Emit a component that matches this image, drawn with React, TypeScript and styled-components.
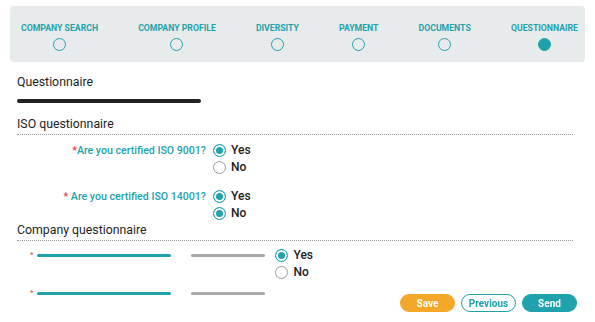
import React from "react";
import styled, { createGlobalStyle } from "styled-components";

const TEAL = "#1fa2ac";
const RED = "#e2404f";

const Global = createGlobalStyle`
  html, body { margin: 0; padding: 0; background: #ffffff; }
  body { font-family: Roboto, "Liberation Sans", Arial, sans-serif; color: #222; }
  * { box-sizing: border-box; }
`;

const Page = styled.div`
  padding: 6px 10px 0 10px;
`;

const Stepper = styled.nav`
  height: 56px;
  background: #e8ebec;
  border-radius: 4px;
  display: flex;
  justify-content: space-between;
  padding: 17px 7px 0 11px;
`;

const Step = styled.div`
  display: flex;
  flex-direction: column;
  align-items: center;
  gap: 4px;
`;

const StepLabel = styled.span`
  font-size: 8.7px;
  line-height: 11px;
  font-weight: 700;
  color: ${TEAL};
  white-space: nowrap;
`;

const StepDot = styled.span<{ $active?: boolean }>`
  width: 13px;
  height: 13px;
  border-radius: 50%;
  border: 1.3px solid ${TEAL};
  background: ${(p) => (p.$active ? TEAL : "transparent")};
`;

const Content = styled.div`
  padding: 0 12px 0 7px;
`;

const Title = styled.h1`
  margin: 12px 0 0 0;
  font-size: 12.3px;
  line-height: 16px;
  font-weight: 400;
  color: #1e1e1e;
`;

const TitleBar = styled.div`
  margin-top: 9px;
  width: 184px;
  height: 3.5px;
  border-radius: 2px;
  background: #222;
`;

const SectionHeading = styled.h2<{ $top: number }>`
  margin: ${(p) => p.$top}px 0 0 0;
  padding-bottom: 2px;
  font-size: 12.3px;
  line-height: 16px;
  font-weight: 400;
  color: #1e1e1e;
  border-bottom: 1px dotted #9a9a9a;
`;

const QuestionRow = styled.div<{ $top: number }>`
  display: grid;
  grid-template-columns: 189px auto;
  column-gap: 7px;
  margin-top: ${(p) => p.$top}px;
`;

const QuestionLabel = styled.label`
  text-align: right;
  font-size: 10.6px;
  line-height: 17px;
  font-weight: 500;
  color: ${TEAL};
  white-space: nowrap;
`;

const Star = styled.span`
  color: ${RED};
`;

const Options = styled.div`
  display: flex;
  flex-direction: column;
`;

const Option = styled.div`
  display: flex;
  align-items: center;
  gap: 5px;
  height: 17px;
  font-size: 12px;
  font-weight: 500;
  color: #222;
`;

const RadioDot = styled.span<{ $checked?: boolean }>`
  width: 13px;
  height: 13px;
  border-radius: 50%;
  border: 1px solid ${(p) => (p.$checked ? TEAL : "#9c9c9c")};
  background: ${(p) => (p.$checked ? TEAL : "#fff")};
  box-shadow: ${(p) => (p.$checked ? "inset 0 0 0 2px #fff" : "none")};
`;

const CompanyRow = styled.div<{ $top: number }>`
  display: flex;
  align-items: flex-start;
  margin-top: ${(p) => p.$top}px;
  padding-left: 13px;
`;

const PlaceholderLine = styled.div`
  display: flex;
  align-items: center;
  height: 17px;
`;

const SmallStar = styled.span`
  color: ${RED};
  font-size: 8px;
  line-height: 8px;
  margin-right: 4px;
`;

const Bar = styled.span<{ $width: number; $color: string; $gap?: number }>`
  display: block;
  width: ${(p) => p.$width}px;
  height: 3px;
  border-radius: 2px;
  background: ${(p) => p.$color};
  margin-left: ${(p) => p.$gap ?? 0}px;
`;

const CompanyOptions = styled(Options)`
  margin-left: 10px;
`;

const Footer = styled.div`
  position: fixed;
  right: 18px;
  bottom: 10px;
  display: flex;
  gap: 6px;
`;

const Button = styled.button<{ $variant: "save" | "previous" | "send" }>`
  width: 55px;
  height: 18px;
  border-radius: 9px;
  font-family: Roboto, "Liberation Sans", Arial, sans-serif;
  font-size: 10px;
  font-weight: 700;
  padding: 0;
  cursor: pointer;
  border: 1px solid
    ${(p) => (p.$variant === "save" ? "#f4a82a" : TEAL)};
  background: ${(p) =>
    p.$variant === "save" ? "#f4a82a" : p.$variant === "send" ? TEAL : "#fff"};
  color: ${(p) => (p.$variant === "previous" ? TEAL : "#fff")};
`;

const steps = [
  "COMPANY SEARCH",
  "COMPANY PROFILE",
  "DIVERSITY",
  "PAYMENT",
  "DOCUMENTS",
  "QUESTIONNAIRE",
];

const Radio = ({ label, checked }: { label: string; checked?: boolean }) => (
  <Option>
    <RadioDot $checked={checked} />
    {label}
  </Option>
);

export default function App() {
  return (
    <>
      <Global />
      <Page>
        <Stepper>
          {steps.map((s, i) => (
            <Step key={s}>
              <StepLabel>{s}</StepLabel>
              <StepDot $active={i === steps.length - 1} />
            </Step>
          ))}
        </Stepper>
        <Content>
          <Title>Questionnaire</Title>
          <TitleBar />
          <SectionHeading $top={13}>ISO questionnaire</SectionHeading>
          <QuestionRow $top={7}>
            <QuestionLabel>
              <Star>*</Star>Are you certified ISO 9001?
            </QuestionLabel>
            <Options>
              <Radio label="Yes" checked />
              <Radio label="No" />
            </Options>
          </QuestionRow>
          <QuestionRow $top={12}>
            <QuestionLabel>
              <Star>*</Star> Are you certified ISO 14001?
            </QuestionLabel>
            <Options>
              <Radio label="Yes" checked />
              <Radio label="No" checked />
            </Options>
          </QuestionRow>
          <SectionHeading $top={0}>Company questionnaire</SectionHeading>
          <CompanyRow $top={6}>
            <PlaceholderLine>
              <SmallStar>*</SmallStar>
              <Bar $width={134} $color={TEAL} />
              <Bar $width={74} $color="#a9a9a9" $gap={20} />
            </PlaceholderLine>
            <CompanyOptions>
              <Radio label="Yes" checked />
              <Radio label="No" />
            </CompanyOptions>
          </CompanyRow>
          <CompanyRow $top={4}>
            <PlaceholderLine>
              <SmallStar>*</SmallStar>
              <Bar $width={134} $color={TEAL} />
              <Bar $width={74} $color="#a9a9a9" $gap={20} />
            </PlaceholderLine>
          </CompanyRow>
        </Content>
        <Footer>
          <Button $variant="save">Save</Button>
          <Button $variant="previous">Previous</Button>
          <Button $variant="send">Send</Button>
        </Footer>
      </Page>
    </>
  );
}
